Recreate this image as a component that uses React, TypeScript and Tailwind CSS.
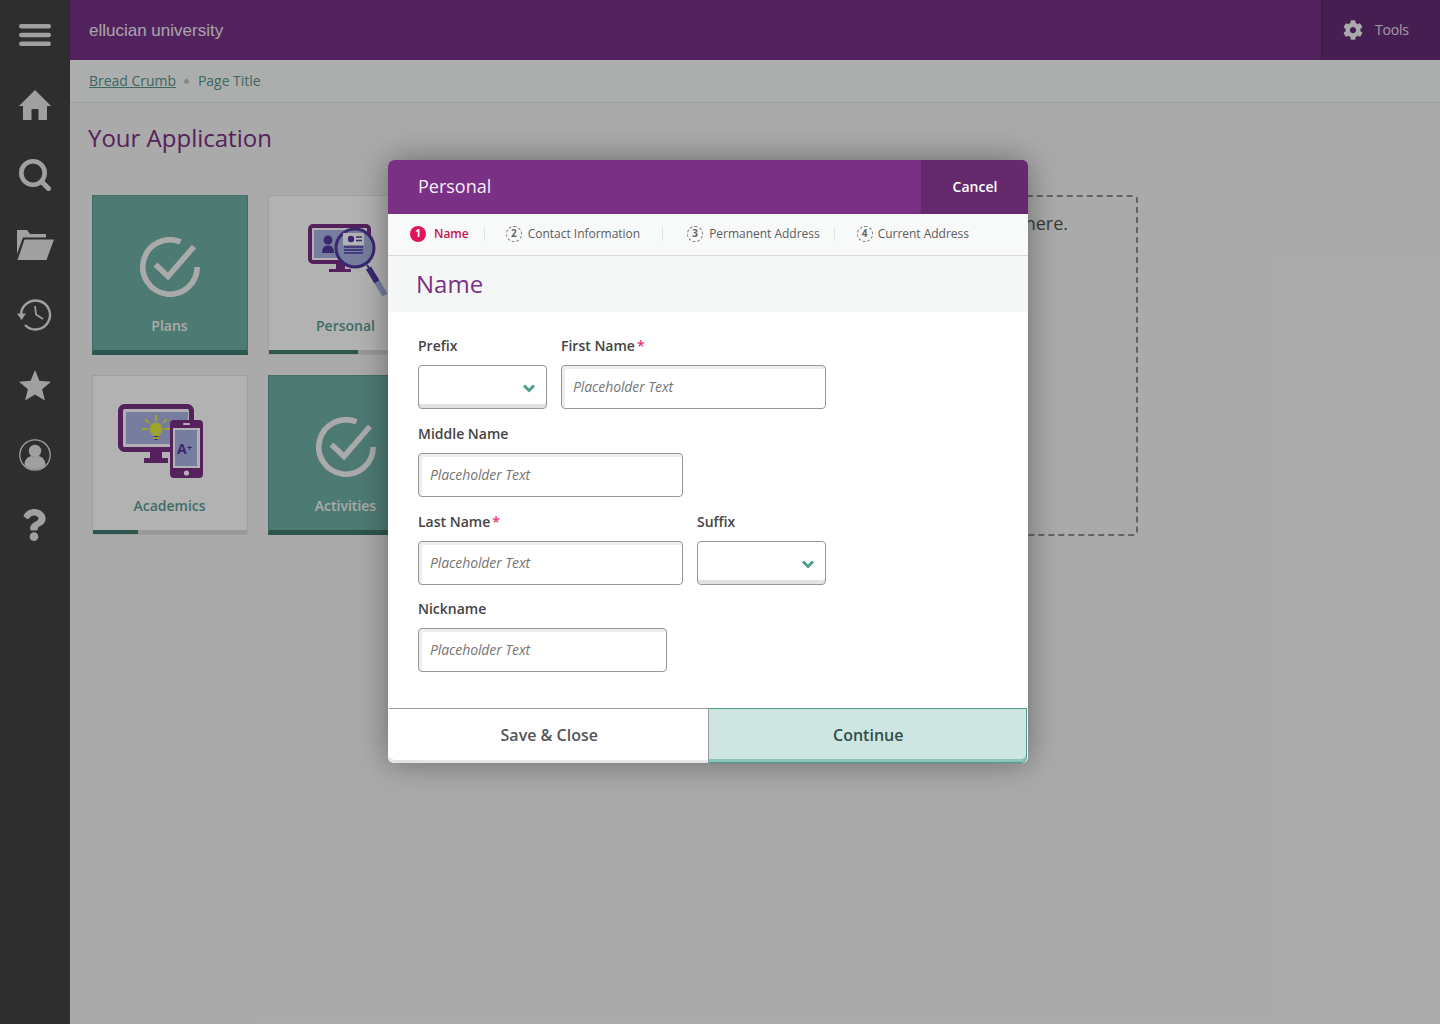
import { FaCog, FaQuestion } from 'react-icons/fa';

const font = "font-['Open_Sans',sans-serif]";

function MenuIcon() {
  return (
    <svg width="32" height="22" viewBox="0 0 32 22" fill="currentColor">
      <rect y="0" width="32" height="4.6" rx="2.3" />
      <rect y="8.7" width="32" height="4.6" rx="2.3" />
      <rect y="17.4" width="32" height="4.6" rx="2.3" />
    </svg>
  );
}

function HomeIcon() {
  return (
    <svg width="32" height="30" viewBox="0 0 32 30" fill="currentColor">
      <path d="M16 0 L32 16 L28 16 L28 30 L19.5 30 L19.5 19 L12.5 19 L12.5 30 L4 30 L4 16 L0 16 Z" />
    </svg>
  );
}

function SearchIcon() {
  return (
    <svg width="32" height="32" viewBox="0 0 32 32" fill="none" stroke="currentColor">
      <circle cx="14" cy="14" r="11.7" strokeWidth="4.6" />
      <path d="M23 23 L29.5 29.5" strokeWidth="5" strokeLinecap="round" />
    </svg>
  );
}

function FolderIcon() {
  return (
    <svg width="37" height="30" viewBox="0 0 37 30" fill="currentColor">
      <path d="M0 0 H10 L13 4 H29 V7.5 H6 L0 24 Z" />
      <path d="M7.5 9.5 H37 L29.5 30 H0.5 Z" />
    </svg>
  );
}

function HistoryIcon() {
  return (
    <svg width="36" height="32" viewBox="0 0 36 32" fill="none" stroke="currentColor">
      <path d="M4 16 A14.5 14.5 0 1 1 8 26" strokeWidth="2.4" />
      <path d="M0 14.5 L9 14.5 L4.5 21 Z" fill="currentColor" stroke="none" />
      <path d="M18 7 L19 15.5 L26 20" strokeWidth="1.7" />
    </svg>
  );
}

function StarIcon() {
  return (
    <svg width="32" height="31" viewBox="0 0 32 31" fill="currentColor">
      <path d="M16 0 L20.4 10.8 L32 11.7 L23.1 19.2 L25.9 30.5 L16 24.4 L6.1 30.5 L8.9 19.2 L0 11.7 L11.6 10.8 Z" />
    </svg>
  );
}

function UserIcon() {
  return (
    <svg width="32" height="32" viewBox="0 0 32 32" fill="currentColor">
      <circle cx="16" cy="16" r="15.2" fill="none" stroke="currentColor" strokeWidth="1.3" />
      <circle cx="16" cy="12" r="6.2" />
      <path d="M5.5 26 C5.5 19.5 10 17.5 12.5 17 C14.5 18.5 17.5 18.5 19.5 17 C22 17.5 26.5 19.5 26.5 26 C23.5 29.5 19.5 30.5 16 30.5 C12.5 30.5 8.5 29.5 5.5 26 Z" />
    </svg>
  );
}

function CheckRing() {
  return (
    <svg width="60" height="60" viewBox="0 0 60 60" fill="none" stroke="#f4f4f4" strokeWidth="5.6">
      <path d="M57.2 30 A27.2 27.2 0 1 1 40.5 4.9" />
      <path d="M15.5 27.5 L28 39.5 L54 9.5" />
    </svg>
  );
}

function PersonalArt() {
  return (
    <svg width="80" height="75" viewBox="0 0 80 75">
      <rect x="2" y="2" width="59" height="36" rx="3" fill="#fff" stroke="#7a3084" strokeWidth="4" />
      <rect x="6" y="6" width="51" height="28" fill="#aab4e3" />
      <path d="M28 39 H37 V45 H43 V48 H21 V45 H28 Z" fill="#7a3084" />
      <circle cx="20" cy="16" r="4.5" fill="#533aa0" />
      <path d="M14 29 C14 23 17 21.5 20 21.5 C23 21.5 26 23 26 29 Z" fill="#533aa0" />
      <circle cx="47" cy="24" r="19" fill="#aab4e3" stroke="#533aa0" strokeWidth="3" />
      <rect x="35" y="9" width="21" height="22" fill="#fff" />
      <rect x="35" y="21" width="21" height="10" fill="#aab4e3" />
      <circle cx="43" cy="15" r="3.2" fill="#533aa0" />
      <path d="M48 13 H54 M48 16.5 H54 M36 23 H55 M36 26 H55 M36 29 H55" stroke="#533aa0" strokeWidth="1.4" />
      <path d="M59 41 L61 44" stroke="#533aa0" strokeWidth="2" />
      <path d="M60.5 44 L69 58" stroke="#533aa0" strokeWidth="6" />
      <path d="M69 58 L77 71" stroke="#aab4e3" strokeWidth="6" />
    </svg>
  );
}

function AcademicsArt() {
  return (
    <svg width="86" height="75" viewBox="0 0 86 75">
      <rect x="2.5" y="2.5" width="71" height="43" rx="4" fill="#fff" stroke="#7a3084" strokeWidth="5" />
      <rect x="8" y="8" width="62" height="32" fill="#aab4e3" />
      <path d="M32 47 H44 V54 H50 V59 H26 V54 H32 Z" fill="#7a3084" />
      <circle cx="38" cy="25" r="6.5" fill="#e3ea3c" />
      <path d="M34.5 30 H41.5 L40.5 35 H35.5 Z" fill="#e3ea3c" />
      <path d="M35.5 32.5 H40.5 M36.5 35.5 H39.5" stroke="#533aa0" strokeWidth="1.2" />
      <path d="M38 11 V17 M27 15 L31 19 M49 15 L45 19 M24 25 H30 M46 25 H52" stroke="#e3ea3c" strokeWidth="2" />
      <rect x="52" y="16" width="33" height="58" rx="4" fill="#7a3084" />
      <rect x="55" y="24" width="27" height="40" fill="#fff" />
      <rect x="57" y="26" width="22" height="36" fill="#aab4e3" />
      <rect x="65" y="19" width="7" height="2" rx="1" fill="#fff" />
      <circle cx="68.5" cy="69" r="2.6" fill="#fff" />
      <text x="59" y="50" fontSize="14" fontWeight="700" fontFamily="Open Sans, sans-serif" fill="#533aa0">A</text>
      <text x="69" y="47" fontSize="9" fontWeight="700" fontFamily="Open Sans, sans-serif" fill="#533aa0">+</text>
    </svg>
  );
}

function SolidTile({ label }: { label: string }) {
  return (
    <div className="flex h-40 flex-col items-center border border-[#5f9f95] border-b-[5px] border-b-[#3f7b70] bg-[#6fb0a6]">
      <div className="mt-[41px] flex h-[60px] items-center justify-center">
        <CheckRing />
      </div>
      <div className="mt-[19px] pr-px text-sm font-semibold text-[#f4f4f4]">{label}</div>
    </div>
  );
}

function ProgressTile({ label, fill, art }: { label: string; fill: string; art: React.ReactNode }) {
  return (
    <div className="flex h-40 flex-col border border-[#e4e4e4] bg-white">
      <div className="relative h-[107px]">{art}</div>
      <div className="mt-[13px] pr-px text-center text-sm font-semibold text-[#5a9e93]">{label}</div>
      <div className="mt-auto h-1 bg-[#dadada]">
        <div className={`h-1 bg-[#3f7b70] ${fill}`} />
      </div>
    </div>
  );
}

function Step({ n, label, active, className, gap }: { n: number; label: string; active?: boolean; className: string; gap: string }) {
  return (
    <div className={`flex h-[14px] items-center border-r border-[#e2e4e4] last:border-r-0 ${gap} ${className}`}>
      {active ? (
        <span className="flex h-4 w-4 items-center justify-center rounded-full bg-[#e0155a] text-[10px] font-bold text-white">{n}</span>
      ) : (
        <span className="flex h-4 w-4 items-center justify-center rounded-full border border-dashed border-[#777] text-[10px] font-bold text-[#666]">{n}</span>
      )}
      <span className={active ? 'text-xs font-semibold text-[#c4134f]' : 'text-xs tracking-[-0.02px] text-[#5c5c5c]'}>{label}</span>
    </div>
  );
}

function Label({ text, required }: { text: string; required?: boolean }) {
  return (
    <div className="mb-[9px] h-5 text-sm leading-5 font-semibold text-[#444]">
      {text}
      {required && <span className="ml-[2px] text-[#e8336f]">*</span>}
    </div>
  );
}

function TextField({ label, required, width }: { label: string; required?: boolean; width: string }) {
  return (
    <div className={width}>
      <Label text={label} required={required} />
      <input
        placeholder="Placeholder Text"
        className="h-11 w-full rounded border border-[#969696] bg-white px-[11px] pb-[2px] text-sm tracking-[-0.1px] shadow-[inset_3px_3px_0_#eeeeee] outline-none placeholder:text-[#757575] placeholder:italic"
      />
    </div>
  );
}

function SelectField({ label, width }: { label: string; width: string }) {
  return (
    <div className={width}>
      <Label text={label} />
      <div className="flex h-11 items-center justify-end rounded border border-[#969696] bg-white pt-px pr-[10px] shadow-[inset_0_-4px_0_#e2e2e2]">
        <svg width="14" height="10" viewBox="0 0 14 10" fill="none" stroke="#4f9c8f" strokeWidth="3">
          <path d="M2 2.5 L7 7.5 L12 2.5" />
        </svg>
      </div>
    </div>
  );
}

export default function App() {
  return (
    <div className={`relative flex h-[1024px] w-[1440px] overflow-hidden bg-[#f4f4f4] ${font}`}>
      <aside className="flex w-[70px] shrink-0 flex-col bg-[#434343] text-[#e6e6e6]">
        <div className="flex h-[70px] items-center justify-center"><MenuIcon /></div>
        <div className="flex h-[70px] items-center justify-center"><HomeIcon /></div>
        <div className="flex h-[70px] items-center justify-center"><SearchIcon /></div>
        <div className="flex h-[70px] items-center justify-center"><FolderIcon /></div>
        <div className="flex h-[70px] items-center justify-center"><HistoryIcon /></div>
        <div className="flex h-[70px] items-center justify-center"><StarIcon /></div>
        <div className="flex h-[70px] items-center justify-center"><UserIcon /></div>
        <div className="flex h-[70px] items-center justify-center pr-[2px]"><FaQuestion size={32} /></div>
      </aside>

      <main className="flex min-w-0 flex-1 flex-col">
        <header className="flex h-[60px] items-center justify-between bg-[#763287] pl-[19px]">
          <span className="pt-px font-['Liberation_Sans',sans-serif] text-[17px] text-[#f2eaf4]">ellucian university</span>
          <div className="flex h-full w-[119px] items-center gap-3 border-l border-[#5c2669] bg-[#662b74] pl-[21px] text-[#f4f4f4]">
            <FaCog size={20} />
            <span className="text-sm tracking-[-0.2px] text-[#e8e0ea]">Tools</span>
          </div>
        </header>

        <nav className="flex h-[43px] items-center border-b border-[#e2e8ea] bg-[#f7f9fa] pl-[19px] text-sm tracking-[-0.03px] text-[#5a9489]">
          <a className="underline">Bread Crumb</a>
          <span className="mr-[9px] ml-2 h-[5px] w-[5px] rounded-full bg-[#c0c4c4]" />
          <span>Page Title</span>
        </nav>

        <h1 className="mt-[17px] ml-[18px] h-[36px] text-2xl leading-9 text-[#7a3084]">Your Application</h1>

        <section className="mt-[39px] ml-[22px] grid grid-cols-[156px_156px_694px] grid-rows-[160px_160px] gap-5">
          <SolidTile label="Plans" />
          <ProgressTile
            label="Personal"
            fill="w-[58%]"
            art={<div className="absolute top-7 left-[39px]"><PersonalArt /></div>}
          />
          <div className="row-span-2 h-[341px] rounded-sm border-2 border-dashed border-[#8f8f8f] pt-3 pr-[68px] text-right text-lg text-[#555]">
            here.
          </div>
          <ProgressTile
            label="Academics"
            fill="w-[29%]"
            art={<div className="absolute top-7 left-[25px]"><AcademicsArt /></div>}
          />
          <SolidTile label="Activities" />
        </section>
      </main>

      <div className="absolute inset-0 bg-black/30 pt-40 pl-[388px]">
        <div className="flex w-[640px] flex-col rounded-md bg-white shadow-[0_0_32px_rgba(0,0,0,0.38)]">
          <div className="flex h-[54px] items-stretch justify-between rounded-t-md bg-[#7a3084]">
            <span className="self-center pb-[3px] pl-[30px] text-lg text-[#f6eff7]">Personal</span>
            <button className="w-[107px] rounded-tr-md bg-[#642a6d] pl-px text-sm font-semibold text-white">Cancel</button>
          </div>

          <div className="flex h-[42px] items-center border-b border-[#d9d9d9] bg-[#f8f9f9] pb-[2px]">
            <Step n={1} label="Name" active gap="gap-2" className="pr-[15px] pl-[22px]" />
            <Step n={2} label="Contact Information" gap="gap-[6px]" className="pr-[22px] pl-[21px]" />
            <Step n={3} label="Permanent Address" gap="gap-[6px]" className="pr-[14px] pl-6" />
            <Step n={4} label="Current Address" gap="gap-[5px]" className="pl-[22px]" />
          </div>

          <div className="flex h-14 items-center bg-[#f5f7f6] pl-7 text-2xl text-[#7a3084]">Name</div>

          <form className="flex flex-col px-[30px] pt-6 pb-9">
            <div className="flex gap-[14px]">
              <SelectField label="Prefix" width="w-[129px]" />
              <TextField label="First Name" required width="w-[265px]" />
            </div>
            <div className="mt-[15px]">
              <TextField label="Middle Name" width="w-[265px]" />
            </div>
            <div className="mt-[15px] flex gap-[14px]">
              <TextField label="Last Name" required width="w-[265px]" />
              <SelectField label="Suffix" width="w-[129px]" />
            </div>
            <div className="mt-[14px]">
              <TextField label="Nickname" width="w-[249px]" />
            </div>
          </form>

          <div className="flex h-[55px] px-px text-base font-semibold">
            <button className="w-[320px] rounded-bl-md border-t border-r border-[#9a9a9a] bg-white pb-[2px] pl-[2px] text-[#555] shadow-[inset_0_-3px_0_#e4e4e4]">
              Save &amp; Close
            </button>
            <button className="w-[319px] rounded-br-md border-t border-r border-b border-[#4f9c8f] bg-[#cee5e1] pb-[2px] pl-[2px] text-[#2f4f4a] shadow-[inset_0_-3px_0_#8cc4ba]">
              Continue
            </button>
          </div>
        </div>
      </div>
    </div>
  );
}
